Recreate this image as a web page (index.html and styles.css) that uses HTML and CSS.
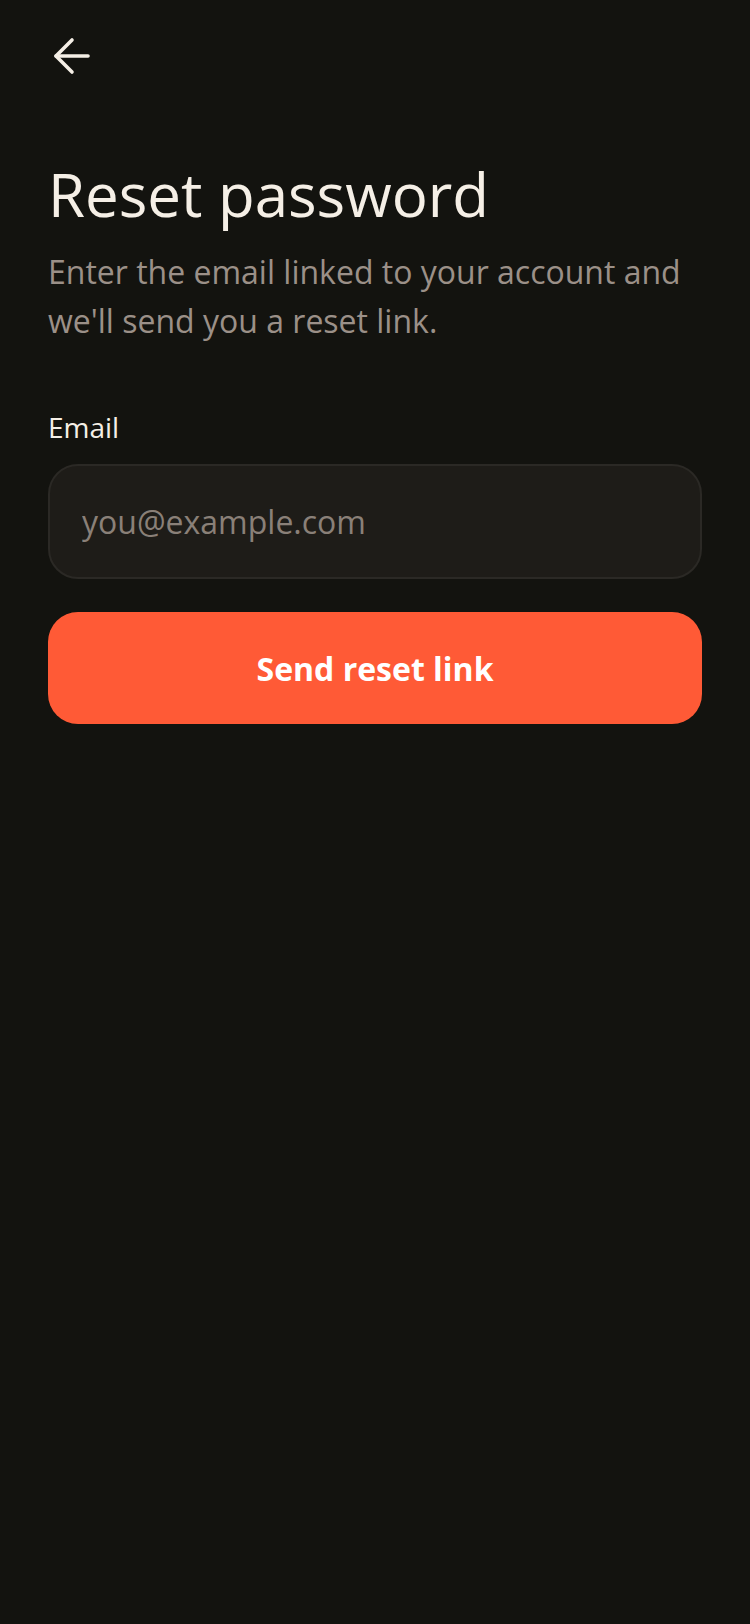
FILE: index.html
```html
<!DOCTYPE html>
<html lang="en">
<head>
<meta charset="utf-8">
<meta name="viewport" content="width=750">
<title>Reset password</title>
<link rel="stylesheet" href="styles.css">
</head>
<body>
<main class="screen">
  <header class="topbar">
    <button class="back" aria-label="Back">
      <svg viewBox="0 0 40 40" width="40" height="40" fill="none" stroke="currentColor" stroke-width="3.6" stroke-linecap="round" stroke-linejoin="round">
        <path d="M4 20H36"/>
        <path d="M20 4L4 20L20 36"/>
      </svg>
    </button>
  </header>
  <h1 class="title">Reset password</h1>
  <p class="subtitle">Enter the email linked to your account and we'll send you a reset link.</p>
  <form class="form">
    <label class="label" for="email">Email</label>
    <input class="input" id="email" type="email" placeholder="you@example.com">
    <button class="submit" type="button">Send reset link</button>
  </form>
</main>
</body>
</html>
```
FILE: styles.css
```css
html, body {
  margin: 0;
  padding: 0;
  background: #13130f;
}
body {
  font-family: "Open Sans", "Noto Sans", sans-serif;
  color: #f5efe6;
  min-height: 1624px;
}
.screen {
  padding: 0 48px;
}
.topbar {
  padding-top: 36px;
  height: 40px;
}
.back {
  display: block;
  width: 40px;
  height: 40px;
  padding: 0;
  margin: 0 0 0 4px;
  border: 0;
  background: none;
  color: #f5efe6;
}
.back svg { display: block; }
.title {
  margin: 82px 0 0;
  font-size: 60px;
  line-height: 72px;
  font-weight: 400;
  color: #f5efe6;
}
.subtitle {
  margin: 17px 0 0;
  font-size: 32px;
  line-height: 49px;
  color: #9b9088;
}
.form {
  display: flex;
  flex-direction: column;
  margin-top: 62px;
}
.label {
  font-size: 28px;
  line-height: 40px;
  color: #f5efe6;
}
.input {
  box-sizing: border-box;
  margin-top: 17px;
  height: 115px;
  width: 100%;
  padding: 0 32px;
  border: 2px solid #2b2925;
  border-radius: 30px;
  background: #1e1c18;
  font-family: inherit;
  font-size: 32px;
  color: #f5efe6;
  outline: none;
}
.input::placeholder {
  color: #8a8078;
}
.submit {
  margin-top: 33px;
  height: 112px;
  width: 100%;
  border: 0;
  border-radius: 30px;
  background: #ff5a36;
  color: #ffffff;
  font-family: inherit;
  font-size: 32px;
  font-weight: 700;
}
```
